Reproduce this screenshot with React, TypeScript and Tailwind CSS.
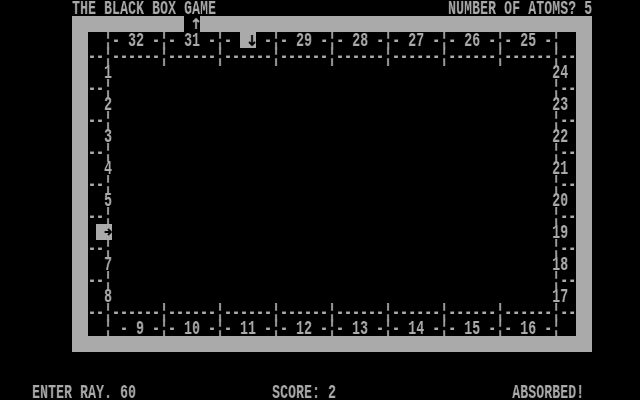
import React from "react";

// One screen cell is 8x16 px. Text is set at 20px Liberation Mono (12px advance)
// and the whole screen is squeezed to 2/3 width so each column lands on 8px.

type Arrow = "up" | "down" | "right";
type Seg = { t: string; gray?: boolean; arrow?: Arrow };

const sp = (n: number) => " ".repeat(n);
const txt = (t: string): Seg => ({ t });
const gray = (t: string): Seg => ({ t, gray: true });

const LEFT = sp(9);
const BAR = "¦";

const topSegs = (nums: number[]) => nums.map((n) => `${BAR}- ${n} -`).join("");
const divider = "--" + (BAR + "------").repeat(8) + BAR + "--";

// arrow glyph drawn in one 8x16 cell (12 wide before the squeeze)
const ArrowGlyph: React.FC<{ dir: Arrow; color: string }> = ({ dir, color }) => {
	const d =
		dir === "down"
			? "M4 3V13M1 10L4 13L7 10"
			: dir === "up"
			? "M4 13V3M1 6L4 3L7 6"
			: "M0.5 8H7M4 5L7 8L4 11";
	return (
		<svg width="12" height="16" viewBox="0 0 8 16" preserveAspectRatio="none" className="block">
			<path d={d} stroke={color} strokeWidth="1.8" fill="none" />
		</svg>
	);
};

const buildRows = (): Seg[][] => {
	const rows: Seg[][] = [];

	// row 0: titles
	rows.push([txt(LEFT + "THE BLACK BOX GAME" + sp(56 - 27) + "NUMBER OF ATOMS? 5")]);

	// row 1: top frame with a gap and the exit arrow
	rows.push([txt(LEFT), gray(sp(14)), txt(" "), { t: "", arrow: "up" }, gray(sp(49))]);

	// row 2: top labels 32..25, 30 highlighted
	rows.push([
		txt(LEFT),
		gray("  "),
		txt("  " + topSegs([32, 31]) + BAR + "- "),
		gray(" "),
		{ t: "", gray: true, arrow: "down" },
		txt(" -" + topSegs([29, 28, 27, 26, 25]) + BAR + "  "),
		gray("  "),
	]);

	// row 3: divider
	rows.push([txt(LEFT), gray("  "), txt(divider), gray("  ")]);

	// rows 4..18: side labels
	for (let k = 0; k < 8; k++) {
		const left = k + 1;
		const right = 24 - k;
		if (left === 6) {
			rows.push([
				txt(LEFT),
				gray("  "),
				txt(" "),
				gray(" "),
				{ t: "", gray: true, arrow: "right" },
				txt(sp(55) + right + " "),
				gray("  "),
			]);
		} else {
			rows.push([txt(LEFT), gray("  "), txt("  " + left + sp(55) + right + " "), gray("  ")]);
		}
		if (k < 7) {
			rows.push([txt(LEFT), gray("  "), txt("--" + BAR + sp(55) + BAR + "--"), gray("  ")]);
		}
	}

	// row 19: divider
	rows.push([txt(LEFT), gray("  "), txt(divider), gray("  ")]);

	// row 20: bottom labels 9..16
	rows.push([
		txt(LEFT),
		gray("  "),
		txt("  " + BAR + " - 9 -" + topSegs([10, 11, 12, 13, 14, 15, 16]) + BAR + "  "),
		gray("  "),
	]);

	// row 21: bottom frame
	rows.push([txt(LEFT), gray(sp(65))]);

	rows.push([txt(" ")]);
	rows.push([txt(" ")]);

	// row 24: status line
	rows.push([
		txt(sp(4) + "ENTER RAY. 60" + sp(34 - 17) + "SCORE: 2" + sp(64 - 42) + "ABSORBED!"),
	]);

	return rows;
};

const ScreenRow: React.FC<{ segs: Seg[] }> = ({ segs }) => (
	<div className="flex h-4">
		{segs.map((s, i) =>
			s.arrow ? (
				<span key={i} className={`block h-4 w-[12px] ${s.gray ? "bg-[#aaaaaa]" : ""}`}>
					<ArrowGlyph dir={s.arrow} color={s.gray ? "#000000" : "#aaaaaa"} />
				</span>
			) : (
				<span key={i} className={`block h-4 ${s.gray ? "bg-[#aaaaaa] text-black" : ""}`}>
					{s.t}
				</span>
			)
		)}
	</div>
);

export default function App() {
	const rows = buildRows();

	return (
		<div className="w-[640px] h-[400px] overflow-hidden bg-black">
			<div
				className="w-[960px] h-[400px] origin-top-left scale-x-[0.6667] will-change-transform whitespace-pre text-[20px] leading-[18px] font-bold text-[#aaaaaa]"
				style={{ fontFamily: '"Liberation Mono", "DejaVu Sans Mono", monospace' }}
			>
				{rows.map((r, i) => (
					<ScreenRow key={i} segs={r} />
				))}
			</div>
		</div>
	);
}
